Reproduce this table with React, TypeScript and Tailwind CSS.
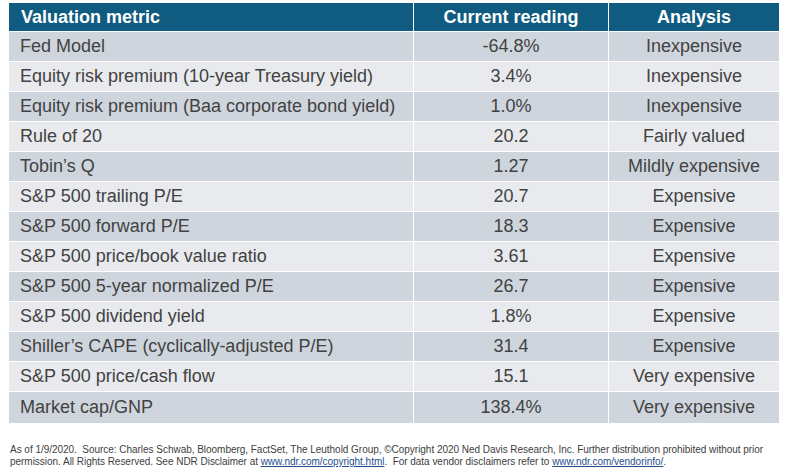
const rows: [string, string, string][] = [
  ['Fed Model', '-64.8%', 'Inexpensive'],
  ['Equity risk premium (10-year Treasury yield)', '3.4%', 'Inexpensive'],
  ['Equity risk premium (Baa corporate bond yield)', '1.0%', 'Inexpensive'],
  ['Rule of 20', '20.2', 'Fairly valued'],
  ['Tobin’s Q', '1.27', 'Mildly expensive'],
  ['S&P 500 trailing P/E', '20.7', 'Expensive'],
  ['S&P 500 forward P/E', '18.3', 'Expensive'],
  ['S&P 500 price/book value ratio', '3.61', 'Expensive'],
  ['S&P 500 5-year normalized P/E', '26.7', 'Expensive'],
  ['S&P 500 dividend yield', '1.8%', 'Expensive'],
  ['Shiller’s CAPE (cyclically-adjusted P/E)', '31.4', 'Expensive'],
  ['S&P 500 price/cash flow', '15.1', 'Very expensive'],
  ['Market cap/GNP', '138.4%', 'Very expensive'],
]

export default function App() {
  return (
    <div
      className="w-[788px] h-[471px] bg-white overflow-hidden pt-[3px]"
      style={{ fontFamily: '"Liberation Sans", Arial, sans-serif' }}
    >
      {/* Table */}
      <div className="ml-[9px] w-[770px]">
        <div className="flex h-[29px] bg-[#0f5c80] text-white font-bold text-[18px] border-b border-white">
          <div className="w-[405px] pl-[12px] flex items-center border-r border-white">Valuation metric</div>
          <div className="w-[195px] flex items-center justify-center border-r border-white">Current reading</div>
          <div className="flex-1 flex items-center justify-center">Analysis</div>
        </div>
        {rows.map((r, i) => (
          <div
            key={i}
            className={`flex h-[30px] text-[18px] text-[#424242] border-b border-white ${
              i % 2 === 0 ? 'bg-[#cfd5dd]' : 'bg-[#e8eaed]'
            } ${i === rows.length - 1 ? 'h-[32px]' : ''}`}
          >
            <div className="w-[405px] pl-[11px] flex items-center border-r border-white">{r[0]}</div>
            <div className="w-[195px] flex items-center justify-center border-r border-white">{r[1]}</div>
            <div className="flex-1 flex items-center justify-center">{r[2]}</div>
          </div>
        ))}
      </div>

      {/* Footer */}
      <div className="mt-[20px] pl-[10px] text-[10px] leading-[12px] tracking-[-0.03px] text-[#404040] whitespace-nowrap">
        <div>
          As of 1/9/2020.&nbsp; Source: Charles Schwab, Bloomberg, FactSet, The Leuthold Group, ©Copyright 2020 Ned Davis Research, Inc. Further distribution prohibited without prior
        </div>
        <div>
          permission. All Rights Reserved. See NDR Disclaimer at{' '}
          <span className="underline text-[#1f4e8c]">www.ndr.com/copyright.html</span>.&nbsp; For data vendor disclaimers refer to{' '}
          <span className="underline text-[#1f4e8c]">www.ndr.com/vendorinfo/</span>.
        </div>
      </div>
    </div>
  )
}
